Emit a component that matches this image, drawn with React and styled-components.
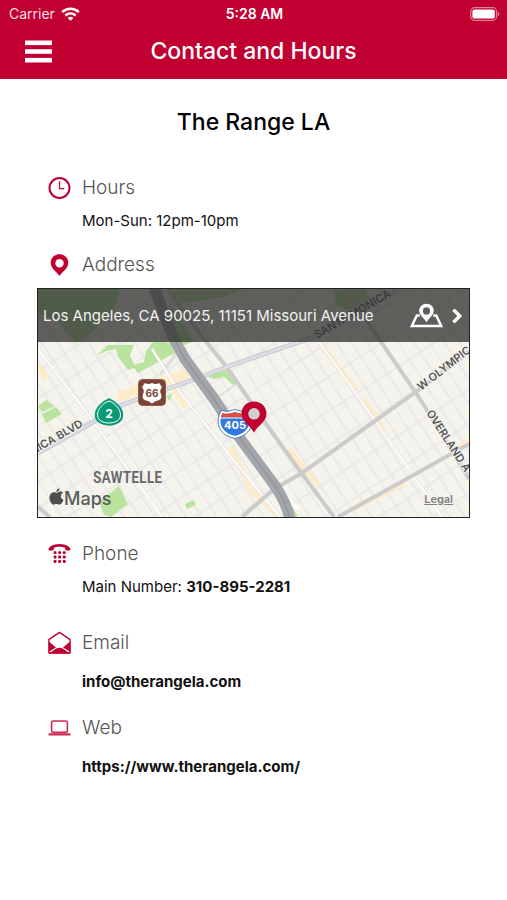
import React, { useState } from 'react';
import styled, { createGlobalStyle } from 'styled-components';

const brand = '#c10032';
const fontStack = 'Inter, "Liberation Sans", sans-serif';

const GlobalStyle = createGlobalStyle`
  * {
    box-sizing: border-box;
  }

  body {
    margin: 0;
    background: #fff;
    color: #111;
    font-family: ${fontStack};
  }
`;

const Page = styled.div`
  min-height: 100vh;
  padding-bottom: 48px;
`;

const Header = styled.header`
  background: ${brand};
  color: #fff;
  padding-bottom: 4px;
`;

const StatusBar = styled.div`
  display: grid;
  grid-template-columns: 1fr auto 1fr;
  align-items: center;
  height: 27px;
  padding: 0 7px 0 9px;
  font-size: 14px;
  line-height: 20px;
`;

const Carrier = styled.span`
  display: flex;
  align-items: center;
  gap: 6px;
  color: #fbdde4;
`;

const Time = styled.span`
  font-weight: 600;
`;

const StatusRight = styled.span`
  display: flex;
  justify-content: flex-end;
`;

const NavBar = styled.div`
  display: grid;
  grid-template-columns: 52px 1fr 52px;
  align-items: center;
  height: 48px;
  padding: 0 12px;
`;

const MenuButton = styled.button`
  display: flex;
  justify-content: center;
  padding: 12px 0;
  border: none;
  background: none;
  color: #fff;
  cursor: pointer;
`;

const NavTitle = styled.h1`
  margin: 0;
  font-size: 23px;
  font-weight: 500;
  line-height: 32px;
  text-align: center;
`;

const Main = styled.main`
  padding: 27px 37px 0;
`;

const VenueName = styled.h2`
  margin: 0 0 38px;
  font-size: 23px;
  font-weight: 500;
  line-height: 32px;
  text-align: center;
  color: #000;
`;

const Section = styled.section`
  margin-bottom: ${props => props.$space || 24}px;
`;

const SectionHeading = styled.div`
  display: flex;
  align-items: center;
  gap: 10px;
  padding-left: 11px;
  margin-bottom: ${props => props.$space || 11}px;

  svg {
    flex: none;
  }
`;

const SectionTitle = styled.h3`
  margin: 0;
  font-size: 19px;
  font-weight: 300;
  line-height: 24px;
  color: #555;
`;

const Detail = styled.p`
  margin: 0;
  padding-left: 45px;
  font-size: 15px;
  line-height: 20px;
`;

const DetailLink = styled.a`
  color: inherit;
  font-weight: 700;
  text-decoration: none;
`;

const MapFrame = styled.div`
  position: relative;
  height: 230px;
  border: 1px solid #222;
  overflow: hidden;
`;

const MapDrawing = styled.svg`
  display: block;
  width: 100%;
  height: 100%;
  font-family: ${fontStack};
`;

const AddressBar = styled.button`
  position: absolute;
  top: 0;
  left: 0;
  right: 0;
  display: flex;
  align-items: center;
  gap: 8px;
  height: 53px;
  padding: 0 6px 0 5px;
  border: none;
  background: rgba(50, 50, 48, 0.77);
  color: #f2f2f2;
  font-family: inherit;
  font-size: 15px;
  line-height: 20px;
  text-align: left;
  cursor: pointer;
`;

const AddressText = styled.span`
  flex: 1;
  white-space: nowrap;
`;

const LegalLink = styled.a`
  position: absolute;
  right: 16px;
  bottom: 11px;
  color: #808080;
  font-size: 11px;
  font-weight: 600;
  line-height: 14px;
`;

const WifiIcon = () => (
  <svg width="19" height="14" viewBox="0 0 19 14" fill="none" stroke="#fff" strokeWidth="2.6" aria-hidden="true">
    <path d="M1.2 5.1 C6 0.7 13 0.7 17.8 5.1" />
    <path d="M4.4 8.4 C7.4 5.8 11.6 5.8 14.6 8.4" />
    <path d="M9.5 13.8 L6.6 10.9 C8.3 9.4 10.7 9.4 12.4 10.9Z" fill="#fff" stroke="none" />
  </svg>
);

const BatteryIcon = () => (
  <svg width="30" height="14" viewBox="0 0 30 14" aria-hidden="true">
    <rect x="0.7" y="0.7" width="25.8" height="12.6" rx="3.8" fill="none" stroke="#e27f98" strokeWidth="1.2" />
    <rect x="2.4" y="2.4" width="22.4" height="9.2" rx="2.2" fill="#fff" />
    <path d="M27.7 4.6 C29.9 5.3 29.9 8.7 27.7 9.4Z" fill="#e27f98" />
  </svg>
);

const MenuIcon = () => (
  <svg width="27" height="23" viewBox="0 0 27 23" fill="#fff" aria-hidden="true">
    <rect y="0.5" width="27" height="4.6" />
    <rect y="9.2" width="27" height="4.6" />
    <rect y="17.9" width="27" height="4.6" />
  </svg>
);

const ClockIcon = () => (
  <svg width="24" height="24" viewBox="0 0 24 24" fill="none" stroke={brand} aria-hidden="true">
    <circle cx="11.5" cy="12" r="10" strokeWidth="2" />
    <path d="M11.5 5.3 V12.6 H16.3" strokeWidth="1.2" />
  </svg>
);

const PinIcon = () => (
  <svg width="24" height="24" viewBox="0 0 24 24" aria-hidden="true">
    <path
      d="M11.5 1.2 C6.3 1.2 2.7 5 2.7 9.8 C2.7 15.3 8.3 18.6 11.5 23 C14.7 18.6 20.3 15.3 20.3 9.8 C20.3 5 16.7 1.2 11.5 1.2Z M11.5 6 A4.2 4.2 0 1 1 11.5 14.4 A4.2 4.2 0 1 1 11.5 6Z"
      fill={brand}
      fillRule="evenodd"
    />
  </svg>
);

const PhoneIcon = () => (
  <svg width="24" height="24" viewBox="0 0 24 24" fill={brand} aria-hidden="true">
    <path d="M0.5 8 C0.2 4.8 5.5 2 11.5 2 C17.5 2 22.8 4.8 22.5 8 C22 8.8 18.3 8.7 17.4 8 L17 5.7 C14 4.3 9 4.3 6 5.7 L5.6 8 C4.7 8.7 1 8.8 0.5 8Z" />
    {[9.2, 13.6, 18].map(y => [5.6, 10.2, 14.8].map(x => (
      <rect key={`${x}-${y}`} x={x} y={y} width="2.9" height="2.9" rx="0.8" />
    )))}
  </svg>
);

const EnvelopeIcon = () => (
  <svg width="24" height="24" viewBox="0 0 24 24" aria-hidden="true">
    <path d="M0.9 8.6 L11.5 1.4 L22.1 8.6 V22 H0.9Z" fill="#fff" stroke={brand} strokeWidth="1.4" strokeLinejoin="round" />
    <path d="M0.8 10.4 L8 16.4 L0.8 20.8Z" fill={brand} />
    <path d="M22.2 10.4 L15 16.4 L22.2 20.8Z" fill={brand} />
    <path d="M1 22.6 L8.2 17.6 Q11.5 15.8 14.8 17.6 L22 22.6Z" fill={brand} />
  </svg>
);

const LaptopIcon = () => (
  <svg width="24" height="24" viewBox="0 0 24 24" fill="none" stroke="#cd2a53" aria-hidden="true">
    <rect x="3.6" y="5" width="15.8" height="11.4" rx="1.6" strokeWidth="1.6" />
    <path d="M1.6 18.4 H21.4" strokeWidth="2.4" strokeLinecap="round" />
  </svg>
);

const MapPinIcon = () => (
  <svg width="33" height="25" viewBox="0 0 33 25" aria-hidden="true">
    <path d="M9.8 12.5 H6.8 L1.8 23 H31.2 L26.2 12.5 H23.2" fill="none" stroke="#fff" strokeWidth="2.4" />
    <path
      d="M16.5 0.8 C12.4 0.8 9.2 3.8 9.2 7.6 C9.2 12 13.5 14.8 16.5 19.2 C19.5 14.8 23.8 12 23.8 7.6 C23.8 3.8 20.6 0.8 16.5 0.8Z M16.5 4.3 A3.6 3.6 0 1 1 16.5 11.5 A3.6 3.6 0 1 1 16.5 4.3Z"
      fill="#fff"
      fillRule="evenodd"
    />
  </svg>
);

const ChevronIcon = () => (
  <svg width="12" height="16" viewBox="0 0 12 16" fill="none" stroke="#fff" strokeWidth="3.4" aria-hidden="true">
    <path d="M2.4 1.8 L8.8 8 L2.4 14.2" />
  </svg>
);

const StreetMap = () => (
  <MapDrawing viewBox="0 0 431 228" preserveAspectRatio="xMidYMid slice" role="img" aria-label="Map of Sawtelle">
    <defs>
      <pattern id="blocksWest" width="23" height="13" patternUnits="userSpaceOnUse" patternTransform="rotate(57)">
        <rect width="23" height="13" fill="#ebeae9" />
        <rect x="1" y="1" width="21" height="11" rx="2.5" fill="#f5f4ec" />
      </pattern>
      <pattern id="blocksEast" width="13" height="29" patternUnits="userSpaceOnUse" patternTransform="rotate(-33)">
        <rect width="13" height="29" fill="#ebeae9" />
        <rect x="1" y="1" width="11" height="27" rx="2.5" fill="#f5f4ec" />
      </pattern>
    </defs>

    <rect width="431" height="228" fill="url(#blocksWest)" />
    <path d="M116 0 L158 72 L202 152 L252 228 H431 V0Z" fill="url(#blocksEast)" />

    {/* commercial strips */}
    <g stroke="#fcecca" strokeWidth="6" fill="none">
      <path d="M282 54 L318 102" />
      <path d="M326 110 L346 142" />
      <path d="M388 0 L398 20" />
      <path d="M192 158 L214 202 L240 226" />
      <path d="M250 160 L280 196" />
      <path d="M366 194 L314 220" />
      <path d="M418 160 L431 152" />
      <path d="M0 76 L8 90" />
      <path d="M80 108 L150 84" strokeWidth="10" />
      <path d="M136 100 L148 118" />
    </g>

    {/* parks */}
    <g fill="#bbe3a0">
      <path d="M0 0 H82 L76 20 L62 34 L48 50 L38 54 L20 32 L0 24Z" />
      <path d="M130 0 H205 L186 8 L144 14Z" />
      <path d="M132 16 L156 52 L147 56 L126 44Z" />
      <path d="M116 52 L134 54 L137 64 L100 84 L96 79 L90 81 L80 68 L78 60 L68 62 L58 67 L70 56 L82 56 L96 56 L92 66 L96 76 L106 73 L108 62Z" />
      <path d="M296 2 L326 0 L334 12 L312 22 L298 16Z" />
      <path d="M168 87 L188 81 L194 84 L200 94 L196 97 L186 88 L176 90Z" />
      <path d="M0 117 L8 111 L17 117 L4 123Z M4 125 L18 118 L24 125 L8 134Z" />
      <path d="M61 213 L81 197 L90 215 L73 228 L66 226Z" />
      <path d="M147 215 L156 211 L158 216 L149 220Z" />
      <path d="M128 108 L134 104 L132 112Z" />
    </g>
    <path d="M304 7 L318 5 L321 13 L307 17Z" fill="#d7d99d" />
    <path d="M229 182 L257 228" stroke="#bbe3a0" strokeWidth="6" />

    {/* minor streets */}
    <g fill="none" stroke="#dedee0" strokeWidth="3">
      <path d="M0 60 L46 120 L84 172 L124 228" />
      <path d="M114 60 L138 98 L198 174 L242 228" />
      <path d="M262 28 L282 54 L345 143 L404 228" />
      <path d="M122 86 L142 60" />
      <path d="M166 88 L190 120 M200 94 L180 108" strokeWidth="2" />
    </g>
    <g fill="none" stroke="#fff" strokeWidth="2">
      <path d="M0 60 L46 120 L84 172 L124 228" />
      <path d="M114 60 L138 98 L198 174 L242 228" />
      <path d="M262 28 L282 54 L345 143 L404 228" />
      <path d="M232 190 L260 220" strokeWidth="3" />
    </g>

    {/* arterials */}
    <g fill="none" stroke="#cbcbcc" strokeWidth="4">
      <path d="M130 0 L158 40 L190 80 L226 132 L262 182 L296 228" />
      <path d="M308 0 L330 34 L378 104 L392 126 L431 190" />
      <path d="M0 218 L12 228" />
      <path d="M431 62 L378 103 L334 134 L264 184 L236 200 L204 228" />
      <path d="M431 155 L372 188 L300 228" />
    </g>
    <path d="M0 164 L50 136 L84 116 L126 101 L160 89 L194 76 L270 50 L310 30 L360 0" fill="none" stroke="#cfcfd5" strokeWidth="5" />
    <path d="M0 164 L50 136 L84 116 L126 101 L160 89 L194 76 L270 50 L310 30 L360 0" fill="none" stroke="#dedfe7" strokeWidth="2" />

    {/* freeway */}
    <path d="M116 -2 L134 46 L147 70 L176 110 L204 152 L232 190 C243 204 249 217 252 230" fill="none" stroke="#a2a5a9" strokeWidth="11" />
    <path d="M116 -2 L134 46 L147 70 L176 110 L204 152 L232 190 C243 204 249 217 252 230" fill="none" stroke="#93969a" strokeWidth="1.5" />

    {/* street names */}
    <g fill="#55565a" stroke="#f5f4ec" strokeWidth="2" paintOrder="stroke" fontSize="11" fontWeight="600">
      <text transform="translate(279 50) rotate(-30)">SANTA MONICA</text>
      <text transform="translate(-5 166) rotate(-30)">NICA BLVD</text>
      <text transform="translate(383 102) rotate(-38)">W OLYMPIC</text>
      <text transform="translate(388 124) rotate(57)">OVERLAND A</text>
    </g>
    <text x="55" y="194" fill="#66676b" fontFamily='"Roboto Condensed", "Liberation Sans Narrow", Roboto, sans-serif' fontSize="16" fontWeight="500">SAWTELLE</text>

    {/* route 66 */}
    <rect x="100.5" y="90.5" width="27" height="26" rx="4" fill="#7b4337" stroke="#8f5c50" />
    <path d="M107 94 Q110 96 114 94 Q118 96 121 94 L124 98 Q121 102 123 105 Q125 111 118 112 L114 114.500 L110 112 Q103 111 105 105 Q107 102 104 98Z" fill="#fff" />
    <text x="114" y="108" textAnchor="middle" fill="#7b4337" fontSize="10" fontWeight="700">66</text>

    {/* state route 2 */}
    <path d="M71 110 C78 113 84.500 119 84.500 126 C84.500 133 77 136 71 136 C65 136 57.500 133 57.500 126 C57.500 119 64 113 71 110Z" fill="#0b9a76" stroke="#0b9a76" strokeWidth="1.500" />
    <path d="M71 112 C77 114 82.500 120 82.500 126 C82.500 132 76 134 71 134 C66 134 59.500 132 59.500 126 C59.500 120 65 114 71 112Z" fill="none" stroke="#fff" strokeWidth="1" />
    <text x="71" y="129" textAnchor="middle" fill="#fff" fontSize="12" fontWeight="700">2</text>

    {/* interstate 405 */}
    <path d="M184 123 Q190 125 197 122 Q204 125 210 123 C216 134 211 145 197 148 C183 145 178 134 184 123Z" fill="#2f78df" stroke="#fff" strokeWidth="2" />
    <path d="M184.500 124 Q190 126 197 123 Q204 126 209.500 124 L211.500 128.500 H182.500Z" fill="#df4d45" />
    <path d="M182 129 H212" stroke="#fff" strokeWidth="1" />
    <path d="M183 121.500 Q190 123.500 197 120.500 Q204 123.500 211 121.500 C218 135 212 146.500 197 149.500 C182 146.500 176 135 183 121.500Z" fill="none" stroke="#4f83c8" strokeWidth="1" />
    <text x="197" y="140" textAnchor="middle" fill="#fff" fontSize="11" fontWeight="700">405</text>

    {/* venue pin */}
    <circle cx="216" cy="124.800" r="7" fill="#cfcfcf" />
    <path
      d="M216 112.500 C208.700 112.500 203.500 118 203.500 124.500 C203.500 133 212 136 216 143.500 C220 136 228.500 133 228.500 124.500 C228.500 118 223.300 112.500 216 112.500Z M216 119 A5.800 5.800 0 1 1 216 130.600 A5.800 5.800 0 1 1 216 119Z"
      fill={brand}
      fillRule="evenodd"
    />

    {/* map credit */}
    <path d="M18.800 203.800 C20 201.500 23.800 203 24 203.700 C20.900 205.700 21.300 209.300 24.500 210.800 C23.500 213.500 22 215.700 20.300 215.700 C19.100 215.700 18.700 215 17.400 215 C16 215 15.600 215.700 14.600 215.700 C12.500 215.700 10.500 211.700 10.500 208.800 C10.500 205.300 12.700 203.200 14.900 203.200 C16.400 203.200 17.200 204.100 18.800 203.800Z M17.300 203 C17.200 201.200 18.800 199.500 20.500 199.300 C20.700 201.300 19.100 203 17.300 203Z" transform="translate(1 0)" fill="#4e4e4e" />
    <text x="26" y="216" fill="#5a5a5a" fontSize="18" fontWeight="500">Maps</text>
  </MapDrawing>
);

const InfoSection = ({ icon, title, space, headingSpace, children }) => (
  <Section $space={space}>
    <SectionHeading $space={headingSpace}>
      {icon}
      <SectionTitle>{title}</SectionTitle>
    </SectionHeading>
    {children}
  </Section>
);

const App = () => {
  const [ menuOpen, setMenuOpen ] = useState(false);

  return (
    <Page>
      <GlobalStyle />
      <Header>
        <StatusBar>
          <Carrier>Carrier <WifiIcon /></Carrier>
          <Time>5:28 AM</Time>
          <StatusRight><BatteryIcon /></StatusRight>
        </StatusBar>
        <NavBar>
          <MenuButton aria-label="Menu" aria-expanded={menuOpen} onClick={() => setMenuOpen(!menuOpen)}>
            <MenuIcon />
          </MenuButton>
          <NavTitle>Contact and Hours</NavTitle>
        </NavBar>
      </Header>
      <Main>
        <VenueName>The Range LA</VenueName>
        <InfoSection icon={<ClockIcon />} title="Hours" space={22}>
          <Detail>Mon-Sun: 12pm-10pm</Detail>
        </InfoSection>
        <InfoSection icon={<PinIcon />} title="Address">
          <MapFrame>
            <StreetMap />
            <AddressBar type="button">
              <AddressText>Los Angeles, CA 90025, 11151 Missouri Avenue</AddressText>
              <MapPinIcon />
              <ChevronIcon />
            </AddressBar>
            <LegalLink href="#legal">Legal</LegalLink>
          </MapFrame>
        </InfoSection>
        <InfoSection icon={<PhoneIcon />} title="Phone" space={34}>
          <Detail>Main Number: <DetailLink href="tel:310-895-2281">310-895-2281</DetailLink></Detail>
        </InfoSection>
        <InfoSection icon={<EnvelopeIcon />} title="Email" headingSpace={17}>
          <Detail><DetailLink href="mailto:info@therangela.com">info@therangela.com</DetailLink></Detail>
        </InfoSection>
        <InfoSection icon={<LaptopIcon />} title="Web" headingSpace={17}>
          <Detail><DetailLink href="https://www.therangela.com/">https://www.therangela.com/</DetailLink></Detail>
        </InfoSection>
      </Main>
    </Page>
  );
};

export default App;
